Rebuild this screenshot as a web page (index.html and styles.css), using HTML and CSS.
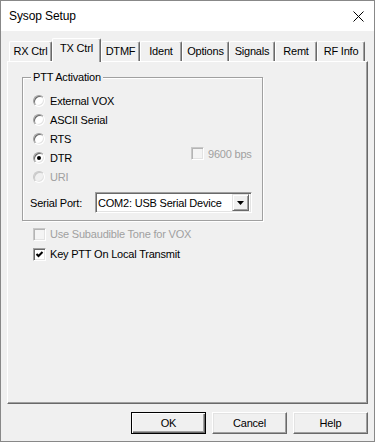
FILE: index.html
```html
<!DOCTYPE html>
<html lang="en">
<head>
    <meta charset="UTF-8">
    <meta name="viewport" content="width=device-width, initial-scale=1.0">
    <title>Sysop Setup</title>
    <link rel="stylesheet" href="styles.css">
</head>
<body>
    <div class="window">
        <div class="titlebar">
            <span class="title">Sysop Setup</span>
            <svg class="close" width="11" height="11" viewBox="0 0 11 11">
                <path d="M0.5 0.5 L10.5 10.5 M10.5 0.5 L0.5 10.5" stroke="#000" stroke-width="1" fill="none"/>
            </svg>
        </div>
        <div class="dialog">
            <div class="tabs">
                <div class="tab w-rx">RX Ctrl</div>
                <div class="tab tab-active w-tx">TX Ctrl</div>
                <div class="tab w-dtmf">DTMF</div>
                <div class="tab w-ident">Ident</div>
                <div class="tab w-options">Options</div>
                <div class="tab w-signals">Signals</div>
                <div class="tab w-remt">Remt</div>
                <div class="tab w-rf">RF Info</div>
            </div>
            <div class="panel">
                <fieldset class="group">
                    <legend>PTT Activation</legend>
                    <div class="group-body">
                        <div class="radios">
                            <div class="option"><span class="radio"></span>External VOX</div>
                            <div class="option"><span class="radio"></span>ASCII Serial</div>
                            <div class="option"><span class="radio"></span>RTS</div>
                            <div class="option"><span class="radio radio-on"></span>DTR</div>
                            <div class="option disabled"><span class="radio"></span>URI</div>
                        </div>
                        <div class="side">
                            <div class="option disabled"><span class="check"></span>9600 bps</div>
                        </div>
                    </div>
                    <div class="port-row">
                        <span class="port-label">Serial Port:</span>
                        <div class="select">
                            <span class="select-value">COM2: USB Serial Device</span>
                            <span class="drop">
                                <svg width="7" height="4" viewBox="0 0 7 4"><path d="M0 0 H7 L3.5 4 Z" fill="#000"/></svg>
                            </span>
                        </div>
                    </div>
                </fieldset>
                <div class="checks">
                    <div class="option disabled"><span class="check"></span>Use Subaudible Tone for VOX</div>
                    <div class="option">
                        <span class="check">
                            <svg width="9" height="9" viewBox="0 0 9 9"><path d="M1.5 4 L3.5 6 L7.5 2" stroke="#000" stroke-width="2" fill="none"/></svg>
                        </span>Key PTT On Local Transmit
                    </div>
                </div>
            </div>
            <div class="buttons">
                <button type="button" class="btn btn-default">OK</button>
                <button type="button" class="btn">Cancel</button>
                <button type="button" class="btn">Help</button>
            </div>
        </div>
    </div>
</body>
</html>
```

FILE: styles.css
```css
* {
    box-sizing: border-box;
}

body {
    margin: 0;
    background-color: #f0f0f0;
    font-family: "Liberation Sans", Arial, sans-serif;
    font-size: 11px;
    letter-spacing: -0.2px;
    color: #000;
}

.window {
    width: 375px;
    height: 442px;
    border: 1px solid #888888;
    background-color: #f0f0f0;
    display: flex;
    flex-direction: column;
}

.titlebar {
    height: 30px;
    background-color: #fff;
    display: flex;
    align-items: center;
    justify-content: space-between;
    padding: 0 10px 0 8px;
}

.title {
    font-size: 12px;
    letter-spacing: -0.1px;
}

.dialog {
    padding: 7px 6px 7px 6px;
}

/* tab strip */

.tabs {
    display: flex;
    align-items: flex-end;
    height: 23px;
    padding-left: 2px;
}

.tab {
    height: 20px;
    margin-bottom: 0;
    display: flex;
    align-items: center;
    justify-content: center;
    padding-bottom: 2px;
    border-top: 1px solid #fff;
    border-left: 1px solid #fff;
    border-right: 1px solid #696969;
    border-radius: 2px 2px 0 0;
    box-shadow: inset -1px 0 0 #a0a0a0;
    background-color: #f0f0f0;
    white-space: nowrap;
}

.tab-active {
    height: 24px;
    margin-bottom: -1px;
    padding-bottom: 5px;
    position: relative;
    z-index: 1;
}

.w-rx { width: 43px; }
.w-tx { width: 49px; }
.w-dtmf { width: 39px; }
.w-ident { width: 42px; }
.w-options { width: 47px; }
.w-signals { width: 46px; }
.w-remt { width: 42px; }
.w-rf { width: 48px; }

.panel {
    height: 343px;
    border-top: 1px solid #fff;
    border-left: 1px solid #fff;
    border-right: 1px solid #696969;
    border-bottom: 1px solid #696969;
    box-shadow: inset -1px -1px 0 #a0a0a0;
    padding: 9px 0 0 14px;
}

/* group box */

.group {
    width: 241px;
    margin: 0;
    padding: 7px 7px 7px 7px;
    border: 1px solid #a0a0a0;
    box-shadow: inset 1px 1px 0 #fff, 1px 1px 0 #fff;
}

.group legend {
    margin-left: 1px;
    padding: 0 2px;
    line-height: 13px;
    background-color: #f0f0f0;
}

.group-body {
    display: grid;
    grid-template-columns: 161px auto;
}

.radios .option {
    padding-left: 3px;
}

.option {
    display: flex;
    align-items: center;
    height: 19px;
    white-space: nowrap;
}

.disabled {
    color: #a0a0a0;
}

.radio {
    width: 12px;
    height: 12px;
    margin-right: 5px;
    border-radius: 50%;
    border: 1px solid;
    border-color: #a0a0a0 #fff #fff #a0a0a0;
    box-shadow: inset 1px 1px 0 #696969, inset -1px -1px 0 #e3e3e3;
    background-color: #fff;
    display: flex;
    align-items: center;
    justify-content: center;
}

.radio-on::after {
    content: "";
    width: 4px;
    height: 4px;
    border-radius: 50%;
    background-color: #000;
}

.disabled .radio {
    background-color: #f0f0f0;
    box-shadow: inset 1px 1px 0 #c8c8c8, inset -1px -1px 0 #e3e3e3;
    border-color: #c8c8c8 #fff #fff #c8c8c8;
}

.check {
    width: 13px;
    height: 13px;
    margin-right: 4px;
    border: 1px solid;
    border-color: #a0a0a0 #fff #fff #a0a0a0;
    box-shadow: inset 1px 1px 0 #696969, inset -1px -1px 0 #e3e3e3;
    background-color: #fff;
    display: flex;
    align-items: center;
    justify-content: center;
}

.disabled .check {
    background-color: #f4f4f4;
    border-color: #c8c8c8 #fff #fff #c8c8c8;
    box-shadow: inset 1px 1px 0 #b4b4b4, inset -1px -1px 0 #e3e3e3;
}

.side {
    padding-top: 53px;
}

/* serial port combo */

.port-row {
    display: flex;
    align-items: center;
    height: 21px;
    margin-top: 6px;
}

.port-label {
    width: 65px;
}

.select {
    width: 157px;
    height: 21px;
    display: flex;
    align-items: center;
    justify-content: space-between;
    border: 1px solid;
    border-color: #a0a0a0 #fff #fff #a0a0a0;
    box-shadow: inset 1px 1px 0 #696969, inset -1px -1px 0 #e3e3e3;
    background-color: #fff;
    padding: 2px 2px 2px 2px;
}

.select-value {
    padding-left: 0;
    white-space: nowrap;
}

.drop {
    width: 17px;
    height: 17px;
    display: flex;
    align-items: center;
    justify-content: center;
    background-color: #f0f0f0;
    border: 1px solid;
    border-color: #e3e3e3 #696969 #696969 #e3e3e3;
    box-shadow: inset 1px 1px 0 #fff, inset -1px -1px 0 #a0a0a0;
}

.checks {
    margin-top: 3px;
    padding-left: 11px;
}

.checks .option {
    height: 20px;
}

/* dialog buttons */

.buttons {
    display: flex;
    justify-content: flex-end;
    gap: 6px;
    margin-top: 8px;
}

.btn {
    width: 75px;
    height: 22px;
    padding: 0;
    font-family: "Liberation Sans", Arial, sans-serif;
    font-size: 11px;
    letter-spacing: -0.2px;
    color: #000;
    background-color: #f0f0f0;
    border: 1px solid;
    border-color: #fff #696969 #696969 #fff;
    box-shadow: inset -1px -1px 0 #a0a0a0, inset 1px 1px 0 #e3e3e3;
}

.btn-default {
    border-color: #000;
    box-shadow: inset 1px 1px 0 #fff, inset -1px -1px 0 #696969, inset -2px -2px 0 #a0a0a0;
}
```
